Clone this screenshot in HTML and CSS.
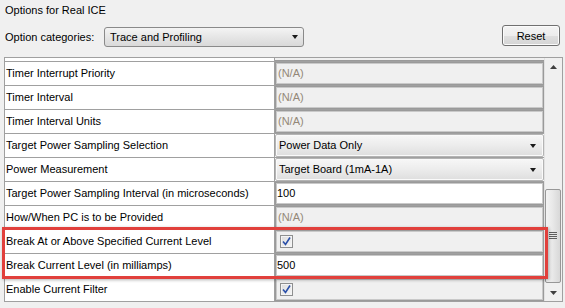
FILE: index.html
```html
<!DOCTYPE html>
<html lang="en">
<head>
    <meta charset="UTF-8">
    <meta name="viewport" content="width=device-width, initial-scale=1.0">
    <title>Options for Real ICE</title>
    <link rel="stylesheet" href="styles.css">
</head>
<body>
    <div class="dialog">
        <div class="title">Options for Real ICE</div>

        <div class="toolbar">
            <span class="cat-label">Option categories:</span>
            <div class="combo main-combo">
                <span>Trace and Profiling</span>
                <span class="arrow"></span>
            </div>
            <button class="btn">Reset</button>
        </div>

        <div class="grid-frame">
            <div class="grid">
                <!-- row scrolled half out of view -->
                <div class="row partial">
                    <div class="name"></div>
                    <div class="value"></div>
                </div>
                <div class="row">
                    <div class="name">Timer Interrupt Priority</div>
                    <div class="value"><div class="editor na">(N/A)</div></div>
                </div>
                <div class="row">
                    <div class="name">Timer Interval</div>
                    <div class="value"><div class="editor na">(N/A)</div></div>
                </div>
                <div class="row">
                    <div class="name">Timer Interval Units</div>
                    <div class="value"><div class="editor na">(N/A)</div></div>
                </div>
                <div class="row">
                    <div class="name">Target Power Sampling Selection</div>
                    <div class="value"><div class="editor cell-combo"><span>Power Data Only</span><span class="arrow"></span></div></div>
                </div>
                <div class="row">
                    <div class="name">Power Measurement</div>
                    <div class="value"><div class="editor cell-combo"><span>Target Board (1mA-1A)</span><span class="arrow"></span></div></div>
                </div>
                <div class="row">
                    <div class="name">Target Power Sampling Interval (in microseconds)</div>
                    <div class="value"><div class="editor text">100</div></div>
                </div>
                <div class="row">
                    <div class="name">How/When PC is to be Provided</div>
                    <div class="value"><div class="editor na">(N/A)</div></div>
                </div>
                <div class="row">
                    <div class="name">Break At or Above Specified Current Level</div>
                    <div class="value"><div class="editor check"><span class="checkbox"><svg width="9" height="9" viewBox="0 0 9 9"><path d="M1 4.5 L3.5 7.5 L8 0.5" fill="none" stroke="#2a4fa8" stroke-width="1.6"/></svg></span></div></div>
                </div>
                <div class="row">
                    <div class="name">Break Current Level (in milliamps)</div>
                    <div class="value"><div class="editor text">500</div></div>
                </div>
                <div class="row">
                    <div class="name">Enable Current Filter</div>
                    <div class="value"><div class="editor check"><span class="checkbox"><svg width="9" height="9" viewBox="0 0 9 9"><path d="M1 4.5 L3.5 7.5 L8 0.5" fill="none" stroke="#2a4fa8" stroke-width="1.6"/></svg></span></div></div>
                </div>
            </div>

            <div class="scrollbar">
                <div class="sb-arrow"><svg width="7" height="4" viewBox="0 0 7 4"><path d="M3.5 0 L7 4 L0 4 Z" fill="#404040"/></svg></div>
                <div class="sb-track">
                    <div class="sb-thumb">
                        <div class="grip"></div>
                    </div>
                </div>
                <div class="sb-arrow"><svg width="7" height="4" viewBox="0 0 7 4"><path d="M0 0 L7 0 L3.5 4 Z" fill="#404040"/></svg></div>
            </div>
        </div>

        <!-- red annotation box drawn over the two rows -->
        <div class="highlight"></div>
    </div>
</body>
</html>
```

FILE: styles.css
```css
* {
    margin: 0;
    padding: 0;
    box-sizing: border-box;
}

body {
    font-family: 'Liberation Sans', Arial, sans-serif;
    font-size: 11px;
    color: #000;
    background-color: #f0f0f0;
}

.dialog {
    position: relative;
    width: 565px;
    height: 308px;
    overflow: hidden;
}

.title {
    height: 20px;
    line-height: 20px;
    padding-left: 5px;
}

.toolbar {
    display: flex;
    align-items: flex-start;
    height: 22px;
    margin-top: 5px;
    padding: 0 5px;
}

.cat-label {
    margin-top: 2px;
    line-height: 20px;
    width: 99px;
}

.combo {
    display: flex;
    align-items: center;
    justify-content: space-between;
    border: 1px solid #8a8a8a;
    border-radius: 3px;
    background: linear-gradient(#f4f4f4, #e6e6e6 50%, #d9d9d9);
}

.main-combo {
    margin-top: 2px;
    width: 200px;
    height: 20px;
    padding: 0 5px 0 5px;
}

.arrow {
    width: 0;
    height: 0;
    border-left: 3.5px solid transparent;
    border-right: 3.5px solid transparent;
    border-top: 4px solid #1a1a1a;
}

.btn {
    margin-left: auto;
    width: 58px;
    height: 21px;
    font-family: inherit;
    font-size: 11px;
    color: #000;
    border: 1px solid #707070;
    border-radius: 3px;
    background: linear-gradient(#f4f4f4, #ededed 50%, #e0e0e0 51%, #d4d4d4);
    box-shadow: inset 0 0 0 1px #fbfbfb;
}

.grid-frame {
    display: flex;
    margin: 10px 0 0 4px;
    width: 559px;
    height: 245px;
    border: 1px solid #a0a0a0;
    background-color: #fff;
}

.grid {
    width: 539px;
}

.row {
    display: grid;
    grid-template-columns: 269px 1px 269px;
    height: 24px;
    border-top: 1px solid #a0a0a0;
}

.row.partial {
    height: 3px;
    border-top: none;
}

.row .name {
    grid-column: 1;
    background-color: #fff;
    padding-left: 1px;
    line-height: 23px;
    white-space: nowrap;
    overflow: hidden;
}

.row .value {
    grid-column: 3;
    position: relative;
    background-color: #fff;
}

.row::after {
    content: "";
    grid-column: 2;
    grid-row: 1;
    background-color: #a0a0a0;
}

.row.partial .value {
    background-color: #f0f0f0;
    border-bottom: 1px solid #9a9a9a;
}

.editor {
    height: 23px;
    line-height: 21px;
    border: 1px solid #9a9a9a;
    box-shadow: inset 0 0 0 1px #c9c9c9;
    padding-left: 2px;
    white-space: nowrap;
}

.editor.na {
    background-color: #f0f0f0;
    color: #938878;
}

.editor.text {
    background-color: #fff;
    padding-left: 1px;
}

.editor.cell-combo {
    display: flex;
    align-items: center;
    justify-content: space-between;
    padding: 0 7px 0 3px;
    border-color: #b4b4b4;
    border-radius: 2px;
    box-shadow: inset 0 0 0 1px #fafafa;
    background: linear-gradient(#f7f7f7, #ececec 50%, #dedede);
}

.editor.check {
    display: flex;
    align-items: center;
    background-color: #f0f0f0;
    padding-left: 4px;
}

.checkbox {
    display: flex;
    align-items: center;
    justify-content: center;
    width: 13px;
    height: 13px;
    border: 1px solid #8e8f8f;
    background: linear-gradient(135deg, #dcdcdc, #f6f6f6);
    box-shadow: inset 0 0 0 1px #f4f4f4;
}

.scrollbar {
    display: flex;
    flex-direction: column;
    width: 18px;
    background-color: #f0f0f0;
    border-left: 1px solid #e2e2e2;
}

.sb-arrow {
    height: 17px;
    display: flex;
    align-items: center;
    justify-content: center;
}

.sb-track {
    flex: 1;
    display: flex;
    flex-direction: column;
    justify-content: flex-end;
    padding: 0 0 1px 0;
}

.sb-thumb {
    height: 94px;
    margin: 0 1px 0 0;
    border: 1px solid #979797;
    border-radius: 2px;
    background: linear-gradient(90deg, #f3f3f3, #e9e9e9 45%, #d8d8d8);
    display: flex;
    align-items: center;
    justify-content: center;
}

.grip {
    width: 8px;
    height: 8px;
    background: repeating-linear-gradient(#5e5e5e 0 1px, transparent 1px 2px);
}

.highlight {
    position: absolute;
    left: 2px;
    top: 227px;
    width: 546px;
    height: 52px;
    border: 3px solid #e1403c;
    box-shadow: 1px 1px 3px rgba(0, 0, 0, 0.3);
}
```
